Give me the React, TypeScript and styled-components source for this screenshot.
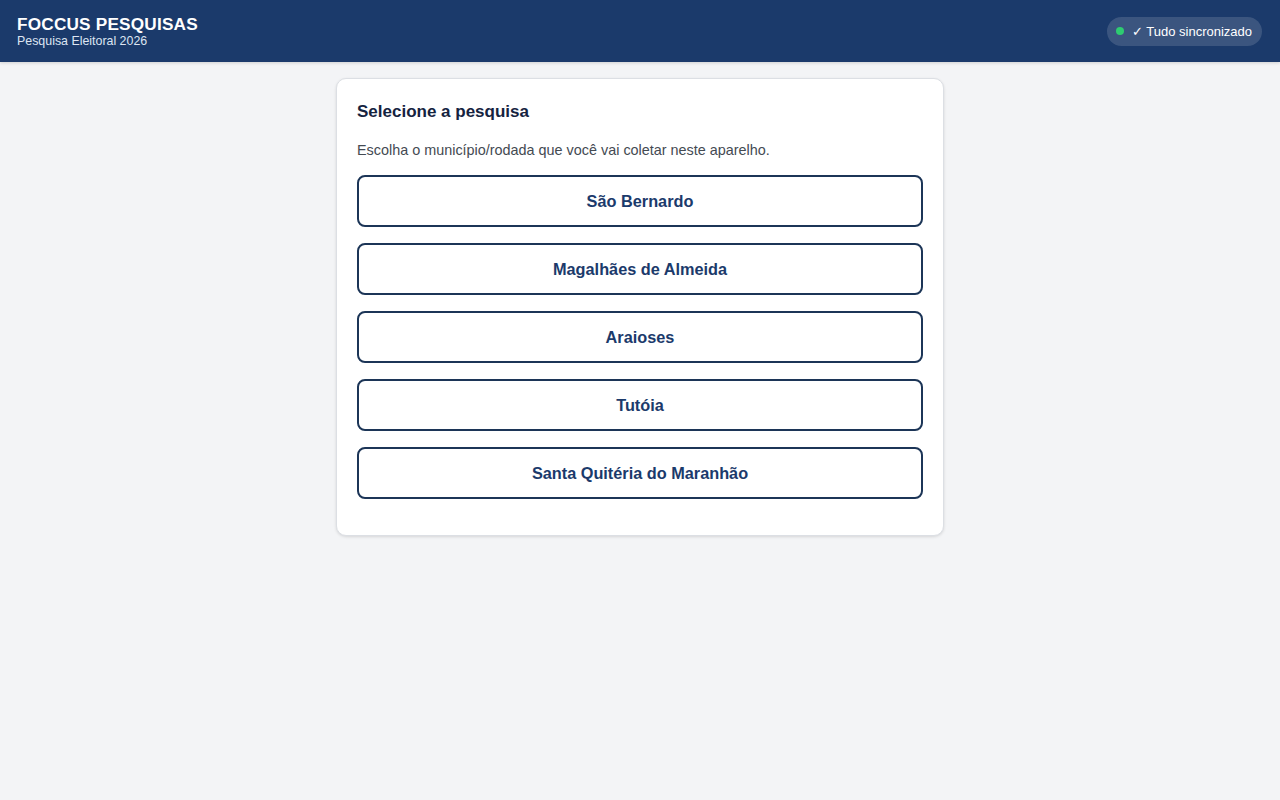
import styled, { createGlobalStyle } from 'styled-components';

const GlobalStyle = createGlobalStyle`
  body {
    margin: 0;
    background-color: #f3f4f6;
    font-family: "Liberation Sans", Arial, sans-serif;
  }
`;

const PageWrapper = styled.div`
  min-height: 100vh;
  display: flex;
  flex-direction: column;
  background-color: #f3f4f6;
`;

const Header = styled.header`
  height: 62px;
  box-sizing: border-box;
  background-color: #1b3a6b;
  color: #fff;
  display: flex;
  align-items: center;
  justify-content: space-between;
  padding: 0 18px 0 17px;
  box-shadow: 0 1px 3px rgba(0, 0, 0, 0.15);
`;

const Brand = styled.div`
  display: flex;
  flex-direction: column;
`;

const BrandTitle = styled.b`
  font-size: 17.2px;
  letter-spacing: 0.2px;
  line-height: 20px;
`;

const BrandSub = styled.span`
  font-size: 12.4px;
  line-height: 15px;
  color: #dde5f2;
`;

const SyncPill = styled.div`
  display: flex;
  align-items: center;
  gap: 8px;
  height: 29px;
  padding: 0 10px 0 9px;
  border-radius: 15px;
  background-color: rgba(255, 255, 255, 0.14);
  font-size: 13px;
  color: #fff;
`;

const Dot = styled.span`
  width: 8px;
  height: 8px;
  border-radius: 50%;
  background-color: #2ecc71;
`;

const Main = styled.main`
  display: flex;
  justify-content: center;
  padding-top: 16px;
`;

const Card = styled.section`
  width: 608px;
  box-sizing: border-box;
  background-color: #fff;
  border: 1px solid #dcdfe4;
  border-radius: 10px;
  padding: 22px 20px 20px;
  box-shadow: 0 1px 3px rgba(0, 0, 0, 0.12);
`;

const CardTitle = styled.h2`
  margin: 0 0 18px;
  font-size: 17px;
  line-height: 22px;
  color: #15233f;
`;

const CardText = styled.p`
  margin: 0 0 16px;
  font-size: 14.4px;
  line-height: 18px;
  color: #444a52;
`;

const OptionList = styled.div`
  display: flex;
  flex-direction: column;
  gap: 16px;
  padding-bottom: 16px;
`;

const OptionButton = styled.button`
  height: 52px;
  width: 100%;
  background-color: #fff;
  border: 2px solid #1c3557;
  border-radius: 8px;
  font-family: inherit;
  font-size: 16.3px;
  font-weight: bold;
  color: #1b3a6b;
  cursor: pointer;
`;

const options = [
  'São Bernardo',
  'Magalhães de Almeida',
  'Araioses',
  'Tutóia',
  'Santa Quitéria do Maranhão',
];

const App = () => {
  return (
    <PageWrapper>
      <GlobalStyle />
      <Header>
        <Brand>
          <BrandTitle>FOCCUS PESQUISAS</BrandTitle>
          <BrandSub>Pesquisa Eleitoral 2026</BrandSub>
        </Brand>
        <SyncPill>
          <Dot />
          <span>✓ Tudo sincronizado</span>
        </SyncPill>
      </Header>
      <Main>
        <Card>
          <CardTitle>Selecione a pesquisa</CardTitle>
          <CardText>Escolha o município/rodada que você vai coletar neste aparelho.</CardText>
          <OptionList>
            {options.map((name) => (
              <OptionButton key={name}>{name}</OptionButton>
            ))}
          </OptionList>
        </Card>
      </Main>
    </PageWrapper>
  );
};

export default App;
